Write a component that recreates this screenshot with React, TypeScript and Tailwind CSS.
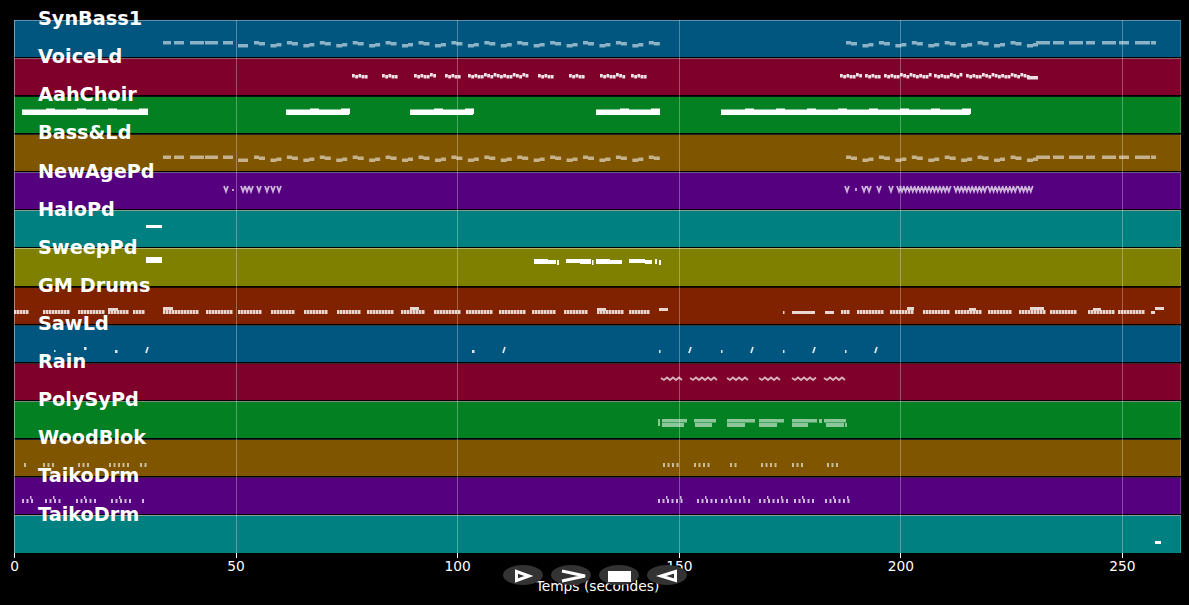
// Piano-roll overview: one coloured lane per MIDI track, notes drawn as svg paths

type Lane = {
  name: string
  color: string
  edge: string
  labelTop: string
  top: number
  height: number
  fill: string
  stroke?: string
  opacity: number
}

// ── Note helpers (x is in page pixels, y relative to the lane top) ──────────

const rect = (x: number, y: number, w: number, h: number) => `M${x} ${y}h${w}v${h}h${-w}z`

function dots(x1: number, x2: number, y: number, h: number, period: number, w: number) {
  let d = ''
  for (let x = x1; x + w <= x2 + 0.5; x += period) d += rect(x, y, w, h)
  return d
}

function wiggle(x1: number, x2: number, y: number, step = 3.2) {
  const offs = [0, 1, 0, 1, 1, -1, 0, 1, -1]
  let d = ''
  let i = 0
  for (let x = x1; x < x2; x += step) {
    d += rect(x, y + offs[i % offs.length], step - 0.4, 3.4)
    i++
  }
  return d
}

function steps(x1: number, count: number, y: number) {
  let d = ''
  for (let k = 0; k < count; k++) {
    const x = x1 + 16.45 * k
    if (k % 2 === 0) {
      d += rect(x, y, 5, 3.6) + rect(x + 5, y + 1, 6, 3.6)
    } else {
      d += rect(x, y + 3, 6, 3.6) + rect(x + 6, y + 2, 5, 3.6)
    }
  }
  return d
}

function bass(y: number) {
  let d = ''
  for (const [a, b] of [[163, 171], [174, 184], [190, 204], [205, 218], [223, 233]]) d += rect(a, y, b - a, 3.6)
  d += steps(254, 25, y) + rect(238, y + 3, 10, 3.6)
  d += steps(846, 12, y)
  for (const [a, b] of [[1036, 1050], [1053, 1064], [1069, 1083], [1086, 1095], [1102, 1116], [1119, 1129], [1135, 1150], [1151, 1156]]) {
    d += rect(a, y, b - a, 3.6)
  }
  return d
}

function choir(a: number, b: number) {
  let d = rect(a, 13.5, b - a, 5.5)
  for (let x = a + 24; x < b - 6; x += 31) d += rect(x, 12.5, 9, 5.5)
  return d + rect(b - 7, 12.5, 7, 6)
}

function vees(x1: number, x2: number, step: number) {
  let d = ''
  for (let x = x1; x < x2; x += step) d += `M${x} 14l2 5.5l2 -5.5`
  return d
}

function wave(a: number, b: number) {
  let d = `M${a} 15`
  let up = false
  for (let x = a + 3; x <= b; x += 3) {
    d += `L${x} ${up ? 14.5 : 17}`
    up = !up
  }
  return d
}

function drums(spans: number[][], y: number) {
  return spans.map(([a, b]) => dots(a, b, y, 4, 3, 2.5)).join('')
}

function ticks(spans: number[][], y: number, h: number, period: number) {
  return spans.map(([a, b]) => dots(a, b, y, h, period, 2)).join('')
}

function taiko(spans: number[][]) {
  let d = ticks(spans, 22, 4, 4.5)
  for (const [a, b] of spans) {
    for (let x = a + 8; x < b; x += 14) d += rect(x, 19, 1.5, 3)
  }
  return d
}

// ── Lanes ───────────────────────────────────────────────────────────────────

const LANES: Lane[] = [
  { name: 'SynBass1', color: 'bg-[#00567f]', edge: 'border-t-[#5a93ad]', labelTop: 'top-[-12px]', top: 20, height: 37, opacity: 0.55, fill: bass(21) },
  {
    name: 'VoiceLd', color: 'bg-[#7f002a]', edge: 'border-t-[#8c5a68]', labelTop: 'top-[-12px]', top: 58, height: 37, opacity: 0.88,
    fill: [[352, 365], [382, 397], [414, 436], [445, 460], [468, 527], [538, 552], [569, 582], [600, 623], [631, 645], [840, 862], [865, 878], [884, 930], [934, 962], [966, 1027]]
      .map(([a, b]) => wiggle(a, b, 16)).join('') + rect(1027, 18, 11, 3.5),
  },
  {
    name: 'AahChoir', color: 'bg-[#028022]', edge: 'border-t-[#111]', labelTop: 'top-[-12px]', top: 96, height: 37, opacity: 1,
    fill: choir(22, 148) + choir(286, 349) + choir(410, 473) + choir(596, 660) + choir(721, 970),
  },
  { name: 'Bass&Ld', color: 'bg-[#7f5500]', edge: 'border-t-[#222]', labelTop: 'top-[-12px]', top: 134, height: 37, opacity: 0.55, fill: bass(21.5) },
  {
    name: 'NewAgePd', color: 'bg-[#55007f]', edge: 'border-t-[#6b5a80]', labelTop: 'top-[-11px]', top: 172, height: 37, opacity: 0.7, fill: '',
    stroke: vees(224, 228, 5) + 'M233 17v2' + vees(241, 250, 4) + vees(257, 261, 5) + vees(265, 283, 6) + vees(845, 850, 5) + 'M856 16v3' + vees(862, 868, 5) + vees(877, 883, 6) + vees(889, 900, 8) + vees(900, 950, 3.6) + vees(954, 985, 3.6) + vees(988, 1014, 3.6) + vees(1018, 1032, 3.6),
  },
  { name: 'HaloPd', color: 'bg-[#008080]', edge: 'border-t-[#8a9a9a]', labelTop: 'top-[-11px]', top: 210, height: 37, opacity: 1, fill: rect(146, 15, 16, 3) },
  {
    name: 'SweepPd', color: 'bg-[#808000]', edge: 'border-t-[#b5b56a]', labelTop: 'top-[-11px]', top: 248, height: 38, opacity: 1,
    fill: rect(146, 9, 16, 6) + rect(534, 11, 14, 5) + rect(548, 12, 8, 4) + rect(557, 12, 2, 5) + rect(566, 11, 14, 4) + rect(580, 11, 11, 5) + rect(592, 12, 1.5, 5) + rect(596, 11, 14, 5) + rect(610, 12, 12, 4) + rect(629, 11, 16, 4) + rect(645, 12, 7, 4) + rect(655, 11, 2, 5) + rect(659, 12, 2, 5),
  },
  {
    name: 'GM Drums', color: 'bg-[#802200]', edge: 'border-t-[#1c0800]', labelTop: 'top-[-12px]', top: 287, height: 37, opacity: 0.82,
    fill: drums([[14, 30], [43, 70], [78, 105], [108, 130], [133, 146], [163, 199], [206, 232], [238, 263], [271, 296], [304, 329], [337, 361], [367, 394], [401, 426], [434, 462], [466, 494], [499, 526], [532, 557], [564, 589], [597, 623], [629, 651], [841, 850], [857, 883], [890, 915], [923, 950], [955, 981], [988, 1012], [1019, 1045], [1050, 1078], [1088, 1115], [1118, 1145]], 23)
      + rect(163, 20, 10, 3) + rect(108, 21, 10, 3) + rect(410, 20, 9, 3) + rect(597, 21, 9, 3) + rect(659, 21, 9, 3) + rect(792, 24, 23, 3) + rect(825, 24, 9, 3) + rect(907, 20, 7, 3) + rect(969, 21, 7, 3) + rect(1030, 20, 14, 3) + rect(1093, 21, 8, 3) + rect(1155, 20, 9, 3) + rect(1151, 24, 4, 3) + rect(783, 24, 1.5, 3),
  },
  {
    name: 'SawLd', color: 'bg-[#00567f]', edge: 'border-t-[#2a3f4c]', labelTop: 'top-[-12px]', top: 325, height: 37, opacity: 0.85,
    fill: rect(54, 25, 1.5, 2) + rect(84, 22, 2.5, 3) + rect(115, 25, 2.5, 3) + rect(472, 25, 2.5, 3) + rect(659, 25, 1.5, 3) + rect(721, 25, 1.5, 3) + rect(783, 25, 1.5, 3) + rect(845, 25, 1.5, 3),
    stroke: 'M146 28l2 -6M503 28l2 -6M689 28l2 -6M751 28l2 -6M813 28l2 -6M875 28l2 -6',
  },
  {
    name: 'Rain', color: 'bg-[#7f002a]', edge: 'border-t-[#3f2029]', labelTop: 'top-[-12px]', top: 363, height: 37, opacity: 0.7, fill: '',
    stroke: wave(661, 684) + wave(690, 717) + wave(727, 750) + wave(759, 781) + wave(792, 818) + wave(824, 845),
  },
  {
    name: 'PolySyPd', color: 'bg-[#028022]', edge: 'border-t-[#7d8a7f]', labelTop: 'top-[-12px]', top: 401, height: 37, opacity: 0.55,
    fill: rect(658, 18, 2, 7) + rect(662, 18, 25, 3.5) + rect(662, 22, 22, 4) + rect(694, 18, 22, 3.5) + rect(695, 22, 17, 4) + rect(727, 18, 28, 3.5) + rect(727, 22, 18, 4) + rect(759, 18, 25, 3.5) + rect(759, 22, 18, 4) + rect(792, 18, 25, 3.5) + rect(792, 22, 16, 4) + rect(819, 18, 3, 4) + rect(824, 18, 22, 3.5) + rect(826, 22, 18, 4) + rect(845, 22, 2, 4),
  },
  {
    name: 'WoodBlok', color: 'bg-[#7f5500]', edge: 'border-t-[#222]', labelTop: 'top-[-12px]', top: 439, height: 37, opacity: 0.6,
    fill: ticks([[24, 26], [43, 57], [78, 92], [109, 132], [140, 146], [663, 678], [694, 709], [730, 740], [761, 779], [792, 806], [827, 841]], 24, 4, 4.5),
  },
  {
    name: 'TaikoDrm', color: 'bg-[#55007f]', edge: 'border-t-[#33223f]', labelTop: 'top-[-12px]', top: 477, height: 37, opacity: 0.72,
    fill: taiko([[22, 36], [45, 62], [76, 98], [111, 133], [142, 144], [658, 685], [697, 718], [721, 750], [759, 788], [794, 816], [825, 851]]),
  },
  { name: 'TaikoDrm', color: 'bg-[#008080]', edge: 'border-t-[#8a9a9a]', labelTop: 'top-[-11px]', top: 515, height: 38, opacity: 1, fill: rect(1155, 26, 6, 3) },
]

const TICKS = [0, 50, 100, 150, 200, 250]

export default function App() {
  return (
    <div className="relative h-[605px] w-[1189px] overflow-hidden bg-black pl-[14px] pt-[20px] font-['DejaVu_Sans',sans-serif] text-white">
      {/* ── Lanes ── */}
      <div className="relative w-[1167px]">
        <div className="flex flex-col gap-px">
          {LANES.map((lane, i) => (
            <LaneRow key={i} lane={lane} />
          ))}
        </div>
        {/* grid lines sit over the notes */}
        <div className="pointer-events-none absolute inset-y-0 left-0 flex w-[1109px] justify-between">
          {TICKS.map((t) => (
            <div key={t} className="w-px bg-white/30" />
          ))}
        </div>
      </div>

      {/* ── X axis ── */}
      <div className="flex w-[1109px] justify-between">
        {TICKS.map((t) => (
          <div key={t} className="flex w-px flex-col items-center">
            <div className="h-[5px] w-px shrink-0 bg-white" />
            <span className="text-[13.75px] leading-[16px]">{t}</span>
          </div>
        ))}
      </div>
      <div className="mt-[4px] w-[1167px] text-center text-[13.75px] leading-[16px]">Temps (secondes)</div>

      {/* ── Playback buttons ── */}
      <div className="absolute left-[503px] top-[565px] flex gap-2">
        <PillButton>
          <path d="M13.5 6.5L26 11L13.5 15.5Z" fill="none" stroke="white" strokeWidth="3" />
        </PillButton>
        <PillButton>
          <path d="M11 6L34 11L11 16" fill="none" stroke="white" strokeWidth="3" />
        </PillButton>
        <PillButton>
          <rect x="9" y="6" width="23" height="11" fill="white" />
        </PillButton>
        <PillButton>
          <path d="M28.5 6.5L14 11L28.5 15.5Z" fill="none" stroke="white" strokeWidth="3" />
        </PillButton>
      </div>
    </div>
  )
}

function LaneRow({ lane }: { lane: Lane }) {
  return (
    <div
      className={`relative box-border border-x border-t border-x-white/20 ${lane.color} ${lane.edge}`}
      style={{ height: lane.height }}
    >
      <svg
        className="absolute left-[-1px] top-[-1px] block"
        width={1167}
        height={lane.height}
        viewBox={`14 0 1167 ${lane.height}`}
      >
        <path d={lane.fill} fill="white" fillOpacity={lane.opacity} />
        {lane.stroke && <path d={lane.stroke} fill="none" stroke="white" strokeOpacity={lane.opacity} strokeWidth="1.8" />}
      </svg>
      <span className={`absolute left-[23px] ${lane.labelTop} whitespace-nowrap text-[19.25px] font-bold leading-none`}>
        {lane.name}
      </span>
    </div>
  )
}

function PillButton({ children }: { children: React.ReactNode }) {
  return (
    <div className="h-5 w-10 rounded-[50%] bg-[#333]">
      <svg width="40" height="20" viewBox="0 0 40 20" className="block">
        {children}
      </svg>
    </div>
  )
}
